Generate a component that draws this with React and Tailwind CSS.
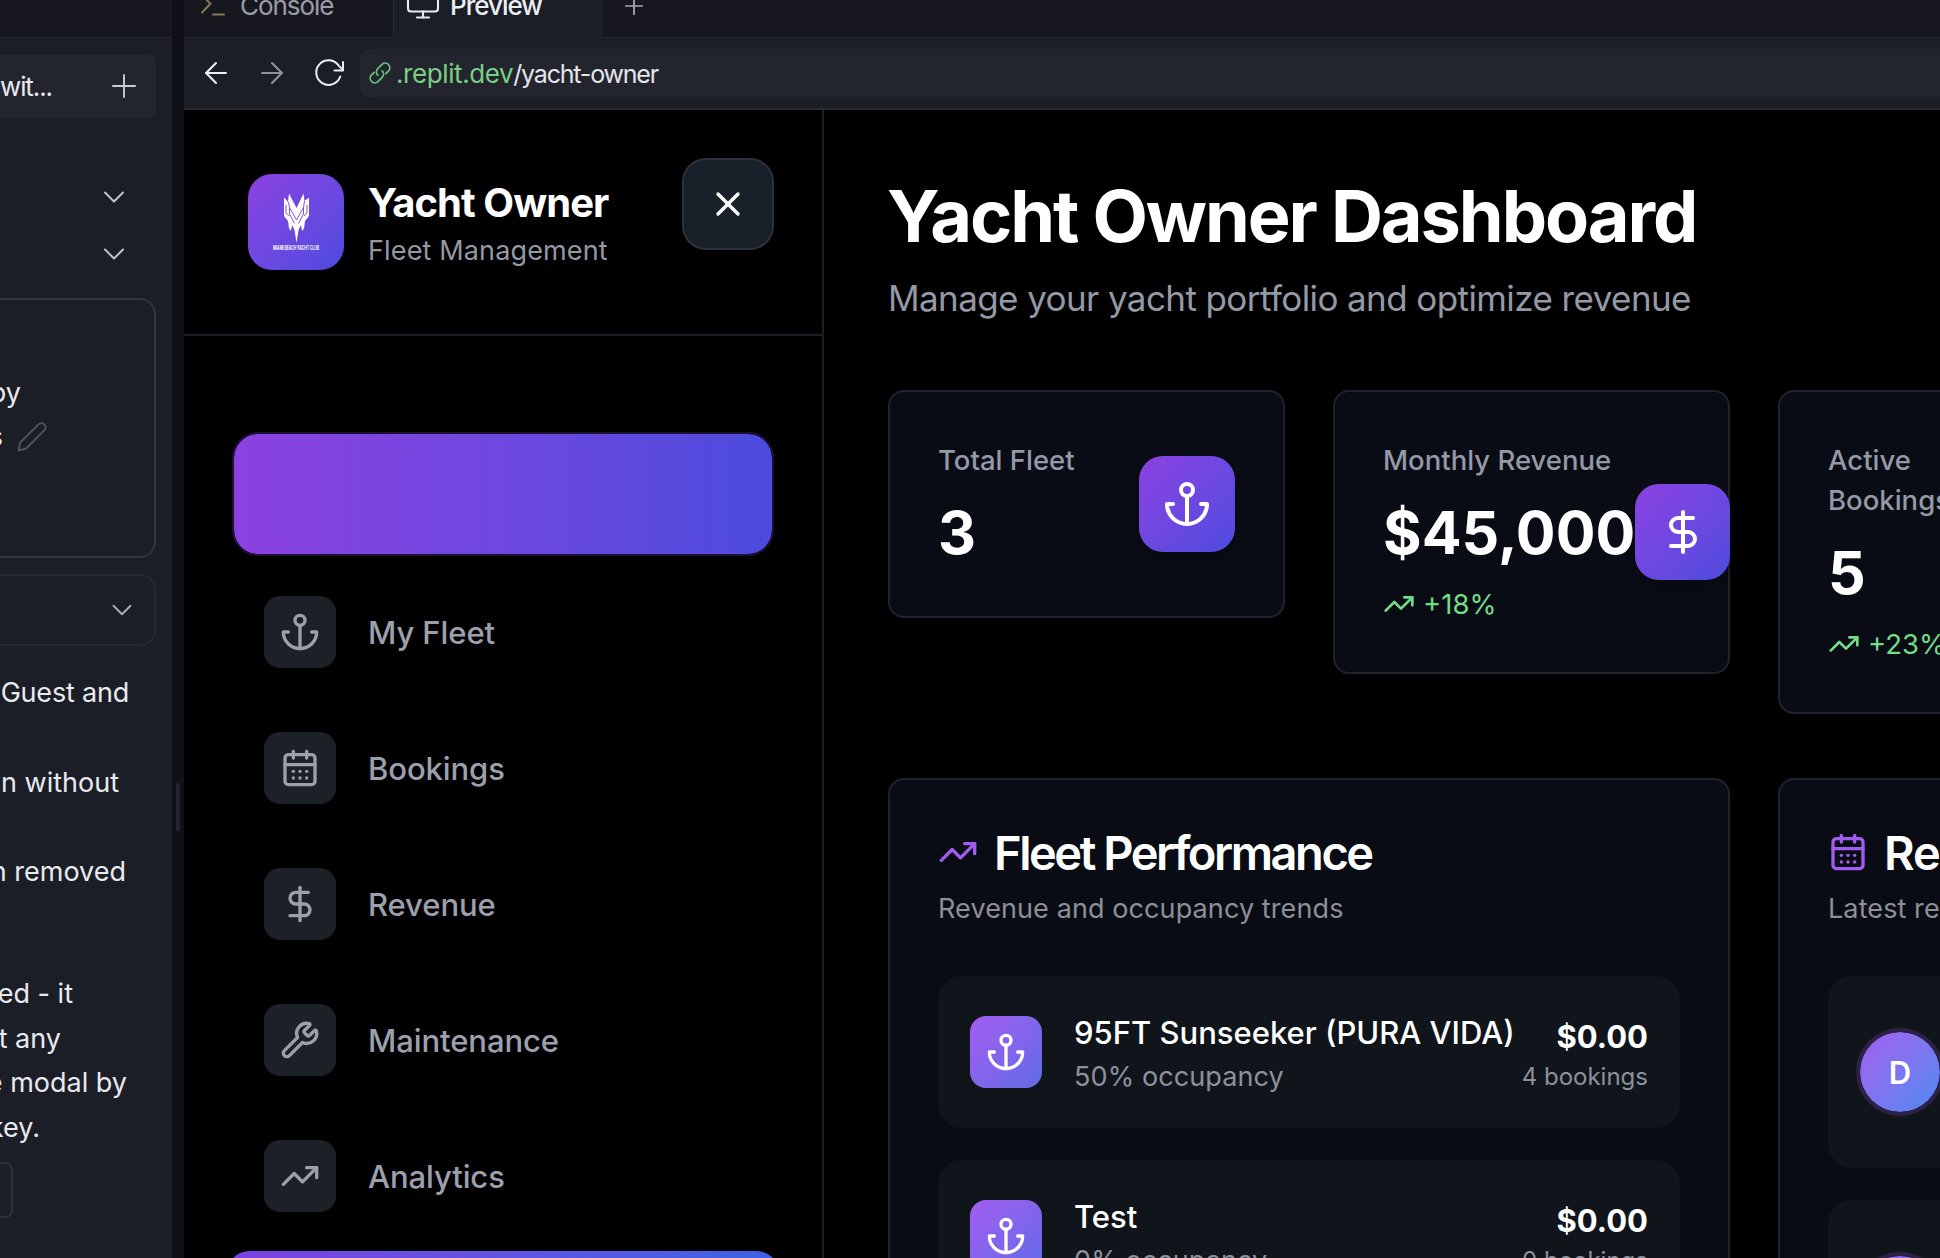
import React from "react";
import {
  ArrowLeft,
  ArrowRight,
  CalendarDays,
  ChevronDown,
  DollarSign,
  Monitor,
  Plus,
  TrendingUp,
  Wrench,
  X,
} from "lucide-react";

function Anchor({ className }) {
  return (
    <svg className={className} viewBox="0 0 24 24" fill="none" stroke="currentColor" strokeWidth="2" strokeLinecap="round" strokeLinejoin="round">
      <circle cx="12" cy="5" r="3" />
      <path d="M12 22V8" />
      <path d="M5 12H2a10 10 0 0 0 20 0h-3" />
    </svg>
  );
}

function ReloadIcon() {
  return (
    <svg className="h-[30px] w-[32px]" viewBox="0 0 32 30" fill="none" stroke="#eceef2" strokeWidth="2" strokeLinecap="round" strokeLinejoin="round">
      <path d="M26.200 18.500 A12.300 12.300 0 1 1 24.700 7.600 L28.500 11.500" />
      <path d="M29 4 V12.500 H20.500" />
    </svg>
  );
}

function LinkIcon() {
  return (
    <svg className="h-[24px] w-[24px]" viewBox="0 0 24 24" fill="none" stroke="#6cc47a" strokeWidth="1.7" strokeLinecap="round">
      <path d="M9.800 14.200a4.600 4.600 0 0 1 0-6.500l4.300-4.300a4.600 4.600 0 0 1 6.500 6.500L17.800 12.700" />
      <path d="M14.200 9.800a4.600 4.600 0 0 1 0 6.500l-4.300 4.300a4.600 4.600 0 0 1-6.500-6.500L6.200 11.300" />
    </svg>
  );
}

function PromptIcon() {
  return (
    <svg className="h-[24px] w-[26px]" viewBox="0 0 26 24" fill="none" stroke="#857a55" strokeWidth="2" strokeLinecap="round" strokeLinejoin="round">
      <path d="M2 3 L10.500 11.800 L2 20.500" />
      <path d="M13 22.500 H24" />
    </svg>
  );
}

function PencilIcon() {
  return (
    <svg className="h-[30px] w-[30px]" viewBox="0 0 30 30" fill="none" stroke="#50535b" strokeWidth="1.900" strokeLinejoin="round">
      <path d="M1.500 28.500 L3.200 20.500 L21.500 2.400 A3.900 3.900 0 0 1 27.400 8.200 L9.200 26.500 Z" />
    </svg>
  );
}

function ClubLogo() {
  return (
    <svg className="h-24 w-24" viewBox="0 0 96 96">
      <g fill="#fff">
        <path d="M41 19.500 L48.500 34 L55.500 19.500 L56.500 27 L61 23.500 V42 L57 47 L56 54.500 L54 57 L53 51 L50.500 56 L48.500 69 L46.500 56 L44 51 L43 57 L41 54.500 L40 47 L36 42 V23.500 L40 28 Z" />
      </g>
      <g fill="none" stroke="#7142e0" strokeWidth="0.900">
        <path d="M40.500 28 L41.500 33.500 L48.500 46 L55.500 33.500 L56.500 27" />
        <path d="M38 31 V39 L41 42" />
        <path d="M59 31 V39 L56 42" />
        <path d="M41.500 33.500 V40 L46.500 49.500 M55.500 33.500 V40 L50.500 49.500" />
      </g>
      <text x="25" y="76" textLength="46" lengthAdjust="spacingAndGlyphs" fill="#fff" fontSize="5.500" fontWeight="700" fontFamily="Inter, sans-serif">
        MIAMI BEACH YACHT CLUB
      </text>
    </svg>
  );
}

function ChatLine({ className, children }) {
  return (
    <div className={"flex h-[45px] items-center justify-end whitespace-nowrap text-[27px] text-[#e9eaee] " + className}>
      {children}
    </div>
  );
}

function ChatPanel() {
  return (
    <aside className="flex w-[172px] shrink-0 flex-col overflow-hidden bg-[#1b1e26]">
      <div className="h-[38px] shrink-0 border-b border-[#262934] bg-[#171720]" />
      <div className="mt-4 flex h-16 w-[156px] shrink-0 items-center justify-between rounded-r-lg bg-[#23252e] pr-[13px]">
        <span className="text-[26px] tracking-[-1.1px] text-[#e9eaee]">wit...</span>
        <Plus className="size-[38px] text-[#c9cbd2]" strokeWidth={1.2} />
      </div>
      <div className="mt-[61px] flex w-[132px] shrink-0 flex-col items-end gap-[21px]">
        <ChevronDown className="size-9 text-[#c4c6cd]" strokeWidth={1.3} />
        <ChevronDown className="size-9 text-[#c4c6cd]" strokeWidth={1.3} />
      </div>
      <div className="mt-[26px] h-[260px] w-[156px] shrink-0 rounded-r-2xl border-2 border-l-0 border-[#2d3838] pt-[71px]">
        <ChatLine className="w-[21px]">by</ChatLine>
        <div className="-mt-px flex items-center">
          <ChatLine className="w-[3px]">s</ChatLine>
          <div className="ml-[14px] -mt-0.5">
            <PencilIcon />
          </div>
        </div>
      </div>
      <div className="mt-4 flex h-[72px] w-[156px] shrink-0 items-center justify-end rounded-r-2xl border-2 border-l-0 border-[#262932] pr-[15px]">
        <ChevronDown className="size-[34px] text-[#a9acb5]" strokeWidth={1.4} />
      </div>
      <div className="mt-[25px] flex shrink-0 flex-col">
        <ChatLine className="w-[129px] tracking-[-0.2px]">Guest and</ChatLine>
        <ChatLine className="mt-[45px] w-[119px]">n without</ChatLine>
        <ChatLine className="mt-[44px] w-[126px]">n removed</ChatLine>
        <ChatLine className="mt-[77px] w-[73px]">ed - it</ChatLine>
        <ChatLine className="w-[61px]">t any</ChatLine>
        <ChatLine className="-mt-px w-[127px]">e modal by</ChatLine>
        <ChatLine className="w-[40px]">key.</ChatLine>
      </div>
      <div className="mt-[11px] h-14 w-[13px] shrink-0 rounded-r-lg border-2 border-l-0 border-[#2f323b]" />
    </aside>
  );
}

function TabStrip() {
  return (
    <div className="flex h-[38px] shrink-0 text-[26px]">
      <div className="flex w-[210px] border-r border-b border-[#262934] bg-[#171720] pl-4">
        <div className="-mt-2 h-6">
          <PromptIcon />
        </div>
        <span className="-mt-[13px] ml-[14px] leading-[38px] tracking-[-1.05px] text-[#9a9da8]">Console</span>
      </div>
      <div className="flex w-[207px] bg-[#1b1e26] pl-[11px]">
        <Monitor className="-mt-[14px] size-[36px] text-[#e9eaee]" strokeWidth={1.4} />
        <span className="-mt-[13px] ml-[9px] leading-[38px] font-medium tracking-[-1px] text-[#eceef2]">Preview</span>
      </div>
      <div className="flex flex-1 border-b border-l border-[#262934] bg-[#171720] pl-[18px]">
        <Plus className="-mt-2 size-7 text-[#a9acb5]" strokeWidth={1.5} />
      </div>
    </div>
  );
}

function AddressBar() {
  return (
    <div className="flex h-[72px] shrink-0 items-center border-b-2 border-[#272a35] bg-[#1b1e26] pl-[15px]">
      <ArrowLeft className="size-[34px] text-[#eceef2]" strokeWidth={1.5} />
      <ArrowRight className="ml-[22px] size-[34px] text-[#8f929c]" strokeWidth={1.5} />
      <div className="ml-[25px]">
        <ReloadIcon />
      </div>
      <div className="ml-[14px] flex h-12 flex-1 items-center rounded-l-[10px] bg-[#23252e] pl-2 text-[26px]">
        <LinkIcon />
        <div className="ml-1 flex items-baseline pt-px">
          <span className="tracking-[-0.4px] text-[#7ad083]">.replit.dev</span>
          <span className="text-[25px] tracking-[-1.2px] text-[#e4e6ea]">/yacht-owner</span>
        </div>
      </div>
    </div>
  );
}

const NAV = [
  { label: "My Fleet", Icon: Anchor },
  { label: "Bookings", Icon: CalendarDays },
  { label: "Revenue", Icon: DollarSign },
  { label: "Maintenance", Icon: Wrench },
  { label: "Analytics", Icon: TrendingUp },
];

function Sidebar() {
  return (
    <nav className="flex w-[640px] shrink-0 flex-col overflow-hidden border-r-2 border-[#1c2026] bg-black">
      <header className="relative flex h-[226px] shrink-0 items-center gap-6 border-b-2 border-[#1c2026] px-16">
        <div className="size-24 overflow-hidden rounded-[24px] bg-linear-to-br from-[#8b41e1] to-[#4c4bdf]">
          <ClubLogo />
        </div>
        <div>
          <div className="pt-px text-[40px] leading-[56px] font-bold tracking-[-0.95px] text-white">Yacht Owner</div>
          <div className="text-[27px] leading-[40px] tracking-[0.14px] text-[#9499a6]">Fleet Management</div>
        </div>
        <button className="absolute top-12 right-12 flex size-[92px] items-center justify-center rounded-[24px] border-2 border-[#2b323c] bg-[#18202a]">
          <X className="size-10 text-white" strokeWidth={2} />
        </button>
      </header>
      <div className="mt-24 flex shrink-0 flex-col gap-4 px-12">
        <div className="h-[124px] rounded-[26px] border-2 border-[#1c1035] bg-linear-to-r from-[#8b41e1] to-[#4b4bdd] bg-clip-padding" />
        {NAV.map(({ label, Icon }) => (
          <div key={label} className="flex h-[120px] items-center gap-8 px-8">
            <div className="flex size-[72px] items-center justify-center rounded-2xl bg-[#1c2128]">
              <Icon className="size-10 text-[#9ca0ac]" />
            </div>
            <span className="pt-0.5 text-[31px] font-medium tracking-[-0.08px] text-[#9ca0ac]">{label}</span>
          </div>
        ))}
      </div>
      <div className="mx-[42px] mt-[15px] h-[120px] shrink-0 rounded-[24px] bg-linear-to-r from-[#7a41e3] to-[#3b61e6]" />
    </nav>
  );
}

function StatCard({ label, value, trend, Icon, tile }) {
  return (
    <section className="flex w-[397px] shrink-0 items-center justify-between rounded-2xl border-2 border-[#1e232c] bg-[#090c14] py-12 pl-12">
      <div className="shrink-0">
        <div className="text-[27.5px] leading-[40px] font-medium whitespace-pre-line text-[#9499a6]">{label}</div>
        <div className="mt-[17px] -mb-px text-[59px] leading-[72px] font-bold text-white">{value}</div>
        {trend && (
          <div className="mt-4 flex h-10 items-center gap-2 text-[27.5px] text-[#72dc88]">
            <TrendingUp className="size-8" strokeWidth={2} />
            <span className="pt-px">{trend}</span>
          </div>
        )}
      </div>
      <div className={"flex h-24 shrink-0 items-center justify-center rounded-[24px] bg-linear-to-br from-[#8b41e1] to-[#4c4bdf] shadow-lg " + tile}>
        <Icon className="size-12 text-white" />
      </div>
    </section>
  );
}

function PanelHead({ Icon, title, subtitle, tracking }) {
  return (
    <div>
      <div className="flex h-12 items-center gap-4">
        <Icon className="size-10 text-[#a35cf0]" />
        <h2 className={"pt-0.5 text-[47px] leading-[48px] font-semibold whitespace-nowrap text-white " + tracking}>{title}</h2>
      </div>
      <div className="mt-[13px] -mb-px text-[27px] leading-[40px] tracking-[0.1px] whitespace-nowrap text-[#8e8f98]">{subtitle}</div>
    </div>
  );
}

function YachtRow({ name, occupancy, revenue, bookings }) {
  return (
    <div className="flex h-[152px] items-center rounded-[24px] bg-[#10141b] px-8 whitespace-nowrap">
      <div className="flex size-[72px] shrink-0 items-center justify-center rounded-2xl bg-linear-to-br from-[#a25df0] to-[#5f6ae8]">
        <Anchor className="size-10 text-white" />
      </div>
      <div className="ml-8 flex-1">
        <div className="pt-px text-[31px] leading-[48px] font-medium text-white">{name}</div>
        <div className="text-[27px] leading-[40px] tracking-[0.1px] text-[#8d919d]">{occupancy}</div>
      </div>
      <div className="text-right">
        <div className="pt-px text-[31px] leading-[48px] font-bold text-white">{revenue}</div>
        <div className="text-[24px] leading-[32px] text-[#8d919d]">{bookings}</div>
      </div>
    </div>
  );
}

function GuestRow({ initial }) {
  return (
    <div className="flex h-48 items-center rounded-[24px] bg-[#10141b] px-7">
      <div className="flex size-[88px] items-center justify-center rounded-full border-4 border-[#2d2148] bg-linear-to-br from-[#a25df0] to-[#4489f2] bg-clip-padding pt-0.5 text-[31px] font-semibold text-white">
        {initial}
      </div>
    </div>
  );
}

function Dashboard() {
  return (
    <main className="min-w-0 flex-1 overflow-hidden bg-black pt-[66px] pl-16">
      <h1 className="-ml-px text-[72px] leading-[80px] font-bold tracking-[-2.05px] whitespace-nowrap text-white">Yacht Owner Dashboard</h1>
      <p className="mt-[14px] text-[35px] leading-[56px] tracking-[-0.59px] whitespace-nowrap text-[#9499a6]">Manage your yacht portfolio and optimize revenue</p>
      <div className="mt-16 flex items-start gap-12">
        <StatCard label="Total Fleet" value="3" Icon={Anchor} tile="w-24 mr-12" />
        <StatCard label="Monthly Revenue" value="$45,000" trend="+18%" Icon={DollarSign} tile="w-[95px] -mr-0.5" />
        <StatCard label={"Active\nBookings"} value="5" trend="+23%" Icon={CalendarDays} tile="w-24 mr-12" />
      </div>
      <div className="mt-16 flex gap-12">
        <section className="h-[800px] w-[842px] shrink-0 rounded-2xl border-2 border-[#1e232c] bg-[#090c14] p-12">
          <PanelHead Icon={TrendingUp} title="Fleet Performance" subtitle="Revenue and occupancy trends" tracking="tracking-[-2.45px]" />
          <div className="mt-12 flex flex-col gap-8">
            <YachtRow name="95FT Sunseeker (PURA VIDA)" occupancy="50% occupancy" revenue="$0.00" bookings="4 bookings" />
            <YachtRow name="Test" occupancy="0% occupancy" revenue="$0.00" bookings="0 bookings" />
          </div>
        </section>
        <section className="h-[800px] w-[842px] shrink-0 rounded-2xl border-2 border-[#1e232c] bg-[#090c14] p-12">
          <PanelHead Icon={CalendarDays} title="Recent Bookings" subtitle="Latest reservations" tracking="tracking-[-1px]" />
          <div className="mt-12 flex flex-col gap-8">
            <GuestRow initial="D" />
            <GuestRow initial="D" />
          </div>
        </section>
      </div>
    </main>
  );
}

export default function App() {
  return (
    <div className="flex h-[1258px] w-[1940px] overflow-hidden bg-black font-['Inter',sans-serif]">
      <ChatPanel />
      <div className="flex w-3 shrink-0 items-center justify-center bg-[#101116]">
        <div className="mt-[356px] h-12 w-1 rounded-full bg-[#23262f]" />
      </div>
      <div className="flex min-w-0 flex-1 flex-col">
        <TabStrip />
        <AddressBar />
        <div className="flex min-h-0 flex-1">
          <Sidebar />
          <Dashboard />
        </div>
      </div>
    </div>
  );
}
